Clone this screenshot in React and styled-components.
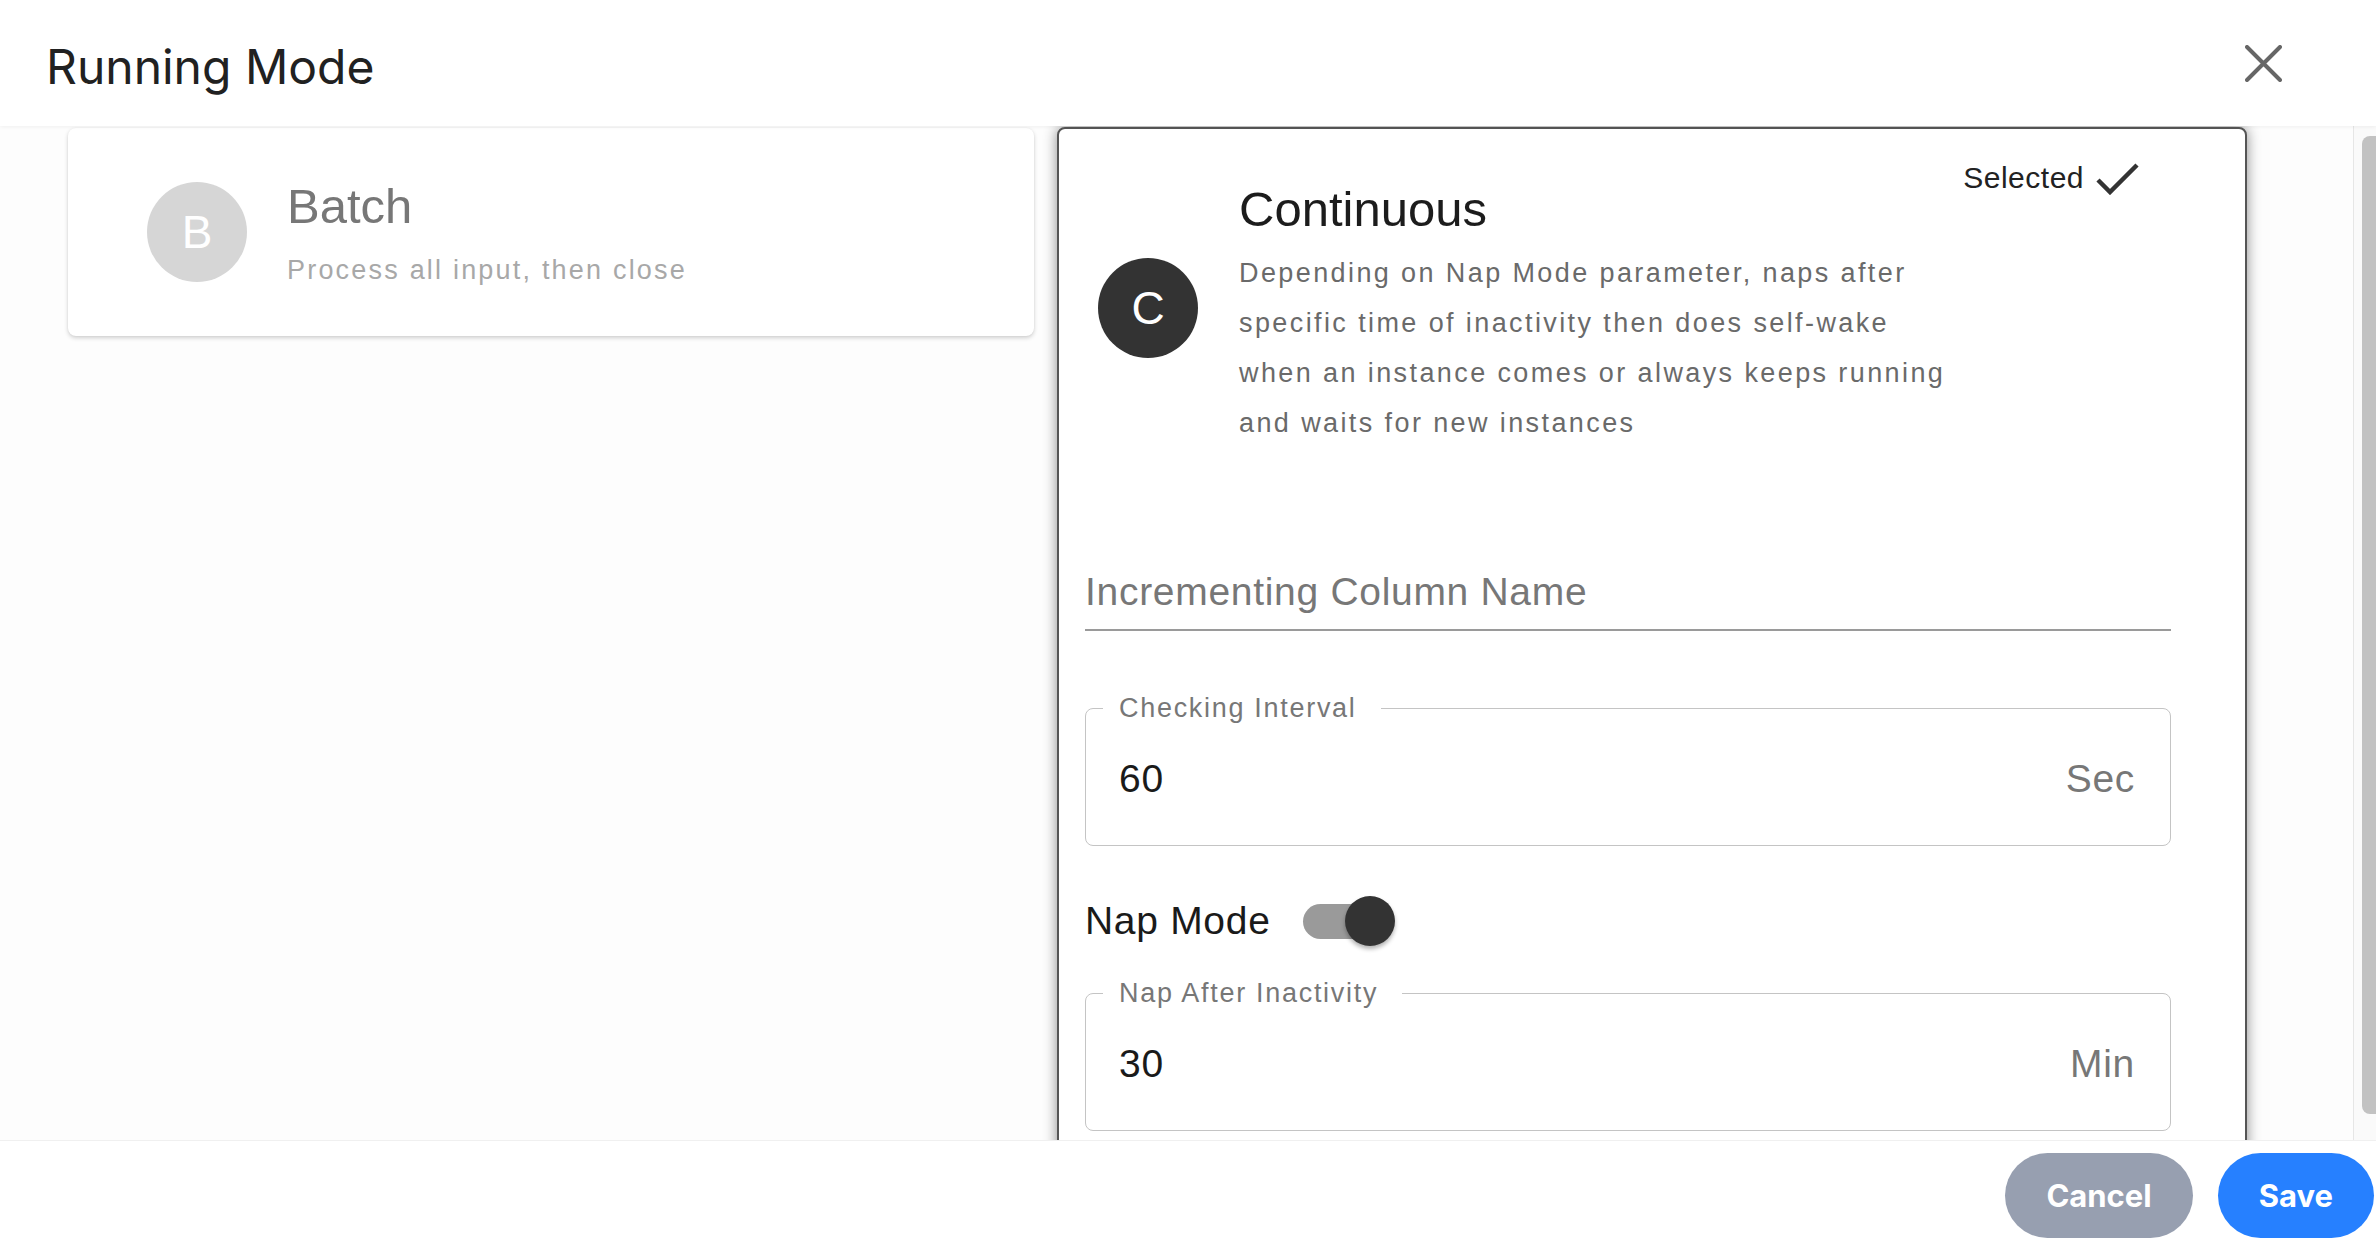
import React from "react"
import styled, { createGlobalStyle, css } from "styled-components"

const GlobalStyle = createGlobalStyle`
  html, body {
    margin: 0;
    padding: 0;
    background: #fff;
  }
  body {
    font-family: "Liberation Sans", Arial, sans-serif;
  }
  * {
    box-sizing: border-box;
  }
`

const Page = styled.div`
  display: flex;
  flex-direction: column;
  width: 2376px;
  height: 1240px;
  overflow: hidden;
`

const Header = styled.header`
  position: relative;
  z-index: 2;
  flex-shrink: 0;
  height: 126px;
  display: flex;
  align-items: center;
  justify-content: space-between;
  padding: 6px 94px 0 46px;
  background: #fff;
  box-shadow: 0 1px 4px rgba(0, 0, 0, 0.06);
`

const Title = styled.h1`
  margin: 0;
  font-family: Inter, "Liberation Sans", sans-serif;
  font-weight: 400;
  font-size: 48px;
  color: #212121;
`

const CloseButton = styled.button`
  display: flex;
  width: 37px;
  height: 37px;
  margin-top: -6px;
  padding: 0;
  border: 0;
  background: none;
  cursor: pointer;
`

const Body = styled.div`
  flex: 1;
  min-height: 0;
  display: flex;
  background: #fdfdfd;
`

const Content = styled.div`
  flex: 1;
  overflow: hidden;
  display: flex;
  align-items: flex-start;
  gap: 23px;
  padding: 1px 0 0 68px;
`

const ScrollRail = styled.div`
  width: 23px;
  flex-shrink: 0;
  border-left: 1px solid #e6e6e6;
  background: #fafafa;
  padding: 10px 0 26px 8px;
  display: flex;
`

const ScrollThumb = styled.div`
  flex: 1;
  border-radius: 8px 0 0 8px;
  background: #c2c2c2;
`

const Card = styled.div`
  flex-shrink: 0;
  width: ${(p) => p.$width}px;
  background: #fff;
  border-radius: 8px;
  ${(p) =>
    p.$selected
      ? css`
          border: 2px solid #555;
          box-shadow: 0 0 14px rgba(0, 0, 0, 0.45);
          padding: 31px 74px 60px 26px;
        `
      : css`
          margin-top: 1px;
          box-shadow: 0 2px 4px rgba(0, 0, 0, 0.18), 0 0 2px rgba(0, 0, 0, 0.05);
          padding: 49px 40px 46px 79px;
          display: flex;
          align-items: center;
          gap: 40px;
        `}
`

const Avatar = styled.div`
  flex-shrink: 0;
  width: 100px;
  height: 100px;
  margin-top: ${(p) => p.$shift || 0}px;
  border-radius: 50%;
  display: flex;
  align-items: center;
  justify-content: center;
  background: ${(p) => (p.$dark ? "#333" : "#d6d6d6")};
  color: #fff;
  font-size: 46px;
`

const TopRow = styled.div`
  display: flex;
  align-items: flex-start;
  padding-left: 13px;

  ${Avatar} {
    align-self: center;
  }
`

const TextCol = styled.div`
  flex: 1;
  margin-top: ${(p) => p.$offset || 0}px;
  margin-left: ${(p) => p.$indent || 0}px;
`

const CardTitle = styled.div`
  font-size: 49px;
  line-height: 58px;
  color: ${(p) => (p.$muted ? "#777" : "#1c1c1c")};
`

const CardSubtitle = styled.div`
  margin-top: 15px;
  font-size: 27px;
  line-height: 40px;
  letter-spacing: 2.2px;
  color: #a8a8a8;
`

const Description = styled.div`
  margin-top: 10px;
  font-size: 27px;
  line-height: 50px;
  letter-spacing: 2.4px;
  color: #6a6a6a;
`

const SelectedTag = styled.div`
  display: flex;
  align-items: center;
  gap: 12px;
  margin-right: 32px;
  font-size: 30px;
  line-height: 36px;
  letter-spacing: 0.5px;
  color: #222;
`

const UnderlineField = styled.div`
  margin-top: 121px;
  padding-bottom: 14px;
  border-bottom: 2px solid #9a9a9a;
  font-size: 39px;
  line-height: 46px;
  letter-spacing: 0.7px;
  color: #777;
`

const OutlinedField = styled.fieldset`
  margin: ${(p) => p.$top}px 0 0;
  padding: 0 35px 38px 17px;
  border: 1.5px solid #c4c4c4;
  border-radius: 8px;
  min-width: 0;
`

const Legend = styled.legend`
  padding: 0 24px 0 16px;
  font-size: 27px;
  line-height: 32px;
  letter-spacing: 1.7px;
  color: #777;
`

const ValueRow = styled.div`
  margin-top: 27px;
  padding-left: 16px;
  height: 56px;
  display: flex;
  align-items: center;
  justify-content: space-between;
  font-size: 39px;
  letter-spacing: 0.7px;
`

const Value = styled.span`
  color: #1a1a1a;
`

const Unit = styled.span`
  color: #777;
`

const ToggleRow = styled.div`
  margin-top: 50px;
  height: 50px;
  display: flex;
  align-items: center;
  gap: 32px;
  font-size: 39px;
  letter-spacing: 0.7px;
  color: #1a1a1a;
`

const Switch = styled.span`
  position: relative;
  width: 92px;
  height: 50px;
  display: flex;
  align-items: center;
`

const SwitchTrack = styled.span`
  width: 84px;
  height: 35px;
  border-radius: 18px;
  background: #9a9a9a;
`

const SwitchThumb = styled.span`
  position: absolute;
  top: 0;
  right: 0;
  width: 50px;
  height: 50px;
  border-radius: 50%;
  background: #333;
  box-shadow: 0 3px 4px rgba(0, 0, 0, 0.3);
`

const Footer = styled.footer`
  position: relative;
  z-index: 2;
  flex-shrink: 0;
  height: 100px;
  display: flex;
  justify-content: flex-end;
  align-items: flex-start;
  gap: 25px;
  padding: 12px 2px 0 0;
  background: #fff;
  border-top: 1px solid #f0f0f0;
`

const Button = styled.button`
  height: 85px;
  padding: 0 41px;
  border: 0;
  border-radius: 43px;
  font-family: Inter, "Liberation Sans", sans-serif;
  font-weight: 700;
  font-size: 31px;
  color: #fff;
  background: ${(p) => (p.$primary ? "#2680ff" : "#979fb0")};
  cursor: pointer;
`

const CloseIcon = () => (
  <svg width="37" height="37" viewBox="0 0 37 37">
    <path d="M2 2 L35 35 M35 2 L2 35" stroke="#666" strokeWidth="4" strokeLinecap="round" />
  </svg>
)

const CheckIcon = () => (
  <svg width="43" height="33" viewBox="0 0 43 33">
    <polyline points="2,18 14,30 41,3" fill="none" stroke="#333" strokeWidth="4.5" />
  </svg>
)

const App = () => {
  return (
    <Page>
      <GlobalStyle />
      <Header>
        <Title>Running Mode</Title>
        <CloseButton aria-label="Close">
          <CloseIcon />
        </CloseButton>
      </Header>
      <Body>
        <Content>
          <Card $width={966}>
            <Avatar $shift={-4}>B</Avatar>
            <TextCol>
              <CardTitle $muted>Batch</CardTitle>
              <CardSubtitle>Process all input, then close</CardSubtitle>
            </TextCol>
          </Card>
          <Card $width={1190} $selected>
            <TopRow>
              <Avatar $dark $shift={8}>C</Avatar>
              <TextCol $offset={20} $indent={41}>
                <CardTitle>Continuous</CardTitle>
                <Description>
                  Depending on Nap Mode parameter, naps after
                  <br />
                  specific time of inactivity then does self-wake
                  <br />
                  when an instance comes or always keeps running
                  <br />
                  and waits for new instances
                </Description>
              </TextCol>
              <SelectedTag>
                Selected
                <CheckIcon />
              </SelectedTag>
            </TopRow>
            <UnderlineField>Incrementing Column Name</UnderlineField>
            <OutlinedField $top={61}>
              <Legend>Checking Interval</Legend>
              <ValueRow>
                <Value>60</Value>
                <Unit>Sec</Unit>
              </ValueRow>
            </OutlinedField>
            <ToggleRow>
              Nap Mode
              <Switch>
                <SwitchTrack />
                <SwitchThumb />
              </Switch>
            </ToggleRow>
            <OutlinedField $top={31}>
              <Legend>Nap After Inactivity</Legend>
              <ValueRow>
                <Value>30</Value>
                <Unit>Min</Unit>
              </ValueRow>
            </OutlinedField>
          </Card>
        </Content>
        <ScrollRail>
          <ScrollThumb />
        </ScrollRail>
      </Body>
      <Footer>
        <Button>Cancel</Button>
        <Button $primary>Save</Button>
      </Footer>
    </Page>
  )
}

export default App
